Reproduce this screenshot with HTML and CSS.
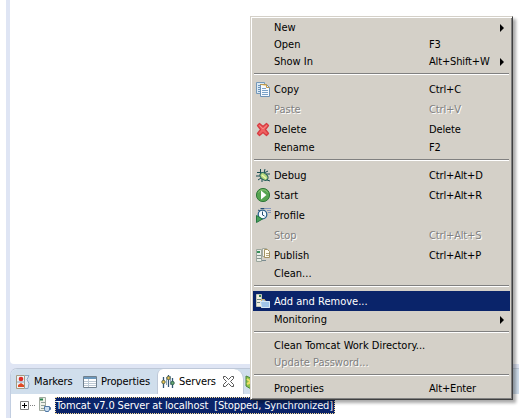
FILE: index.html
```html
<!DOCTYPE html>
<html lang="en">
<head>
<meta charset="utf-8">
<title>Servers</title>
<link rel="stylesheet" href="styles.css">
</head>
<body>
<div class="workbench">
  <main class="editor"></main>
  <section class="view">
    <nav class="tabs">
      <div class="tab markers">
        <svg class="icon" viewBox="0 0 16 16"><path d="M1.500 1.500h8v13h-8z" fill="#edf1f5" stroke="#a39c83"/><path d="M2 8h8" stroke="#8aa6c0"/><circle cx="6" cy="5" r="2.300" fill="#df2b25"/><path d="M3 13V11l3-2 3 2v2z" fill="#df4b25"/><path d="M10 1.500h4l-2 4 2 4-1 5h-3" fill="#dfe9f3" stroke="#8ba9c7"/></svg>
        <span class="t">Markers</span>
      </div>
      <div class="tab properties">
        <svg class="icon" viewBox="0 0 16 16"><path d="M1.500 2.500h13v11h-13z" fill="#fff" stroke="#71808d"/><path d="M2 3h12v2H2z" fill="#6c98bd"/><path d="M6.500 5v8M2 7.500h12M2 9.500h12M2 11.500h12" stroke="#bdc9d4"/></svg>
        <span class="t">Properties</span>
      </div>
      <div class="tab active">
        <svg class="icon" viewBox="0 0 16 16"><path d="M3.500 3v11M8.500 1v12M12.500 4v10" stroke="#315574" stroke-width="1.300"/><path d="M6.500 3v8M10.500 2v9" stroke="#8ba6bb"/><circle cx="3.500" cy="8" r="1.700" fill="#edc64c" stroke="#5c6950"/><circle cx="8.500" cy="4" r="1.700" fill="#e9c151" stroke="#5c6950"/><circle cx="12.500" cy="9" r="1.700" fill="#69ad75" stroke="#31614c"/></svg>
        <span class="t">Servers</span>
        <svg class="close" viewBox="0 0 11 11"><path d="M.5.5h2l3 3 3-3h2v2l-3 3 3 3v2h-2l-3-3-3 3h-2v-2l3-3-3-3z" fill="#fff" stroke="#555"/></svg>
      </div>
      <div class="tab next"><svg class="icon" viewBox="0 0 16 16"><path d="M1 2l5 2 6-2v11l-6 2-5-3z" fill="#8cc34b" stroke="#4c873d"/><path d="M2 5l4 3-4 2" fill="none" stroke="#efdf69" stroke-width="2"/></svg></div>
    </nav>
    <div class="tree">
      <svg class="expander" viewBox="0 0 16 9"><path d="M.5.5h8v8h-8z" fill="#fff" stroke="#808080"/><path d="M2 4.500h5M4.500 2v5" stroke="#000"/><path d="M10 4.500h6" stroke="#808080" stroke-dasharray="1 1"/></svg>
      <svg class="icon server" viewBox="0 0 16 16"><path d="M1.500.5h6v13h-6z" fill="#eef1e8" stroke="#a1aaa0"/><path d="M2 2.500h3" stroke="#26804a" stroke-width="2"/><path d="M3 5.500h4M3 8.500h4M3 11.500h4" stroke="#8f9f98"/><path d="M6.500 9.500h5v3l-1 2h-3l-1-2z" fill="#c9def1" stroke="#4e76a3"/><path d="M11 10.500h1.500v2H11" fill="none" stroke="#4e76a3"/></svg>
      <span class="selected">Tomcat v7.0 Server at localhost&nbsp; [Stopped, Synchronized]</span>
    </div>
  </section>
</div>
<div class="menu">
  <div class="item"><i></i><span>New</span><kbd></kbd><b></b></div>
  <div class="item"><i></i><span>Open</span><kbd>F3</kbd></div>
  <div class="item"><i></i><span>Show In</span><kbd>Alt+Shift+W</kbd><b></b></div>
  <hr>
  <div class="item tall"><i><svg class="icon" viewBox="0 0 16 16"><path d="M.5.5h8v11h-8z" fill="#d9e9f5" stroke="#7598b9"/><path d="M2 3.500h3M2 5.500h3M2 7.500h3M2 9.500h3" stroke="#6b94bb"/><path d="M4.500 2.500h6l3 3v9h-9z" fill="#f7faff" stroke="#6e92b6"/><path d="M4 2.500h6.500v3h3" fill="#f1d596" stroke="#bd994f"/><path d="M6 6.500h4M6 8.500h6M6 10.500h6M6 12.500h6" stroke="#7ba2c8"/></svg></i><span>Copy</span><kbd>Ctrl+C</kbd></div>
  <div class="item tall disabled"><i></i><span>Paste</span><kbd>Ctrl+V</kbd></div>
  <div class="item tall"><i><svg class="icon" viewBox="0 0 16 16"><path d="M1.500 3.500l2-2L7 4.500l3.500-3 2 2L9.500 7.500l3 4-2 2L7 10.500l-3.500 3-2-2 3-4z" fill="#ef6262" stroke="#d83c42" stroke-width="1.300" stroke-linejoin="round"/><path d="M3.500 3.500L7 7l4-3.500" fill="none" stroke="#f58b86"/></svg></i><span>Delete</span><kbd>Delete</kbd></div>
  <div class="item"><i></i><span>Rename</span><kbd>F2</kbd></div>
  <hr>
  <div class="item tall"><i><svg class="icon" viewBox="0 0 16 16"><path d="M4.500 1v3l3 3M1 4.500h4M0 8h5M2 12l3-2M9 1L8 5l4-2M10 6h4M11 12l3 1M6 11v3" fill="none" stroke="#164b50"/><ellipse cx="8" cy="8.500" rx="4.500" ry="3" transform="rotate(40 8 8.500)" fill="#b5d77d" stroke="#24625b"/><path d="M6 7l4 3.500" stroke="#eff7b5" stroke-width="1.300"/></svg></i><span>Debug</span><kbd>Ctrl+Alt+D</kbd></div>
  <div class="item tall"><i><svg class="icon" viewBox="0 0 16 16"><circle cx="7" cy="7" r="6.600" fill="#55a450" stroke="#31783b"/><path d="M2.500 4.500C4 1 10 1 11.500 4.500" fill="none" stroke="#8fc77a"/><path d="M5 2.500L10.500 7 5 11.500z" fill="#fff"/></svg></i><span>Start</span><kbd>Ctrl+Alt+R</kbd></div>
  <div class="item tall"><i><svg class="icon" viewBox="0 0 16 16"><path d="M9 .5h6M11 2.500h4M12 4.500h3" stroke="#8295bd"/><circle cx="6.500" cy="6.500" r="4.300" fill="#f5fbff" stroke="#2b638f" stroke-width="1.300"/><path d="M6.500 3.500v3.500l2 1M4.500 .5h4M2 2l2 1" fill="none" stroke="#244e74"/><path d="M.5 7.500l6 3.500-6 3.500z" fill="#48a25a" stroke="#247441"/></svg></i><span>Profile</span></div>
  <div class="item tall disabled"><i></i><span>Stop</span><kbd>Ctrl+Alt+S</kbd></div>
  <div class="item tall"><i><svg class="icon" viewBox="0 0 16 16"><path d="M.5 1.500h5v12h-5z" fill="#e9ede7" stroke="#9ba69d"/><path d="M1 4h3" stroke="#37905a" stroke-width="2"/><path d="M1 7.500h4M1 10.500h4" stroke="#83938d"/><path d="M6.500 .5h4v8h-4z" fill="#f3f4ef" stroke="#a4a99f"/><path d="M8.500 1.500h3l2 2v6h-5z" fill="#fffdf0" stroke="#a49261"/><path d="M10 5.500h3M10 7.500h3" stroke="#b5a780"/><path d="M6 12.500h4" stroke="#798b91"/></svg></i><span>Publish</span><kbd>Ctrl+Alt+P</kbd></div>
  <div class="item"><i></i><span>Clean...</span></div>
  <hr>
  <div class="item tall hot"><i><svg class="icon" viewBox="0 0 16 16"><path d="M.5.5h5v12h-5z" fill="#f3f0df" stroke="#c3c7b8"/><path d="M3 2h2" stroke="#2f8155" stroke-width="2"/><path d="M1 5.500h4M1 8.500h3" stroke="#718784"/><path d="M5.500 5.500h3l1 2h4v6h-8z" fill="#a9cae9" stroke="#d7b970"/><path d="M4.500 7.500h9v6h-8z" fill="#9fc4e8" stroke="#d6e8f5"/></svg></i><span>Add and Remove...</span></div>
  <div class="item"><i></i><span>Monitoring</span><kbd></kbd><b></b></div>
  <hr>
  <div class="item"><i></i><span>Clean Tomcat Work Directory...</span></div>
  <div class="item disabled"><i></i><span>Update Password...</span></div>
  <hr>
  <div class="item"><i></i><span>Properties</span><kbd>Alt+Enter</kbd></div>
</div>
</body>
</html>
```
FILE: styles.css
```css
* { box-sizing: border-box; }
body {
  margin: 0;
  width: 519px;
  height: 418px;
  overflow: hidden;
  background: #fff;
  color: #000;
  font: 11px/16px "DejaVu Sans Condensed", "DejaVu Sans", sans-serif;
  font-stretch: condensed;
  white-space: nowrap;
}
.workbench {
  height: 418px;
  margin-left: 6px;
  padding-left: 4px;
  background: #dfe5f4;
  display: flex;
  flex-direction: column;
}
.editor { height: 364px; background: #fff; border-bottom-left-radius: 4px; }
.view {
  margin-top: 4px;
  height: 50px;
  border-top: 1px solid #bec8d8;
  border-left: 1px solid #c2cee1;
  border-top-left-radius: 7px;
  background: #fff;
  overflow: hidden;
}
.tabs { display: flex; height: 25px; background: #d0deec; letter-spacing: -0.1px; }
.tab { display: flex; align-items: center; flex: none; }
.icon { width: 16px; height: 16px; flex: none; display: block; }
.tab .t { margin-left: 3px; }
.markers { width: 71px; padding-left: 4px; }
.properties { width: 75px; }
.active {
  width: 87px;
  background: #fff;
  border-left: 1px solid #bec8d8;
  border-right: 1px solid #bec8d8;
  border-radius: 6px 10px 0 0;
  padding-left: 2px;
}
.close { width: 11px; height: 11px; margin-left: 7px; }
.next { padding-left: 1px; }
.tree { display: flex; height: 24px; padding-left: 9px; align-items: flex-start; }
.expander { width: 16px; height: 9px; margin-top: 7px; }
.server { margin: 3px 0 0 2px; }
.selected {
  margin: 3px 0 0 1px;
  width: 280px;
  height: 17px;
  line-height: 15px;
  letter-spacing: -0.13px;
  background: #0a246a;
  color: #fff;
  border: 1px dotted #f5db95;
}
.menu {
  position: absolute;
  left: 250px;
  top: 16px;
  width: 263px;
  height: 384px;
  padding: 2px;
  background: #d4d0c8;
  border: 1px solid;
  border-color: #d4d0c8 #404040 #404040 #d4d0c8;
  box-shadow: inset 1px 1px #fff, inset -1px -1px #808080, 3px 3px 3px #0005;
}
.item { display: flex; align-items: center; height: 17px; }
.tall { height: 20px; padding-top: 2px; }
.item i { width: 21px; padding-left: 3px; flex: none; }
.item span { width: 155px; flex: none; }
.item kbd { width: 71px; font: inherit; letter-spacing: -0.15px; flex: none; }
.item b {
  width: 4px;
  height: 8px;
  border: solid transparent;
  border-width: 4px 0 4px 4px;
  border-left-color: #000;
}
.disabled { color: #808080; text-shadow: 1px 1px #fff; }
.hot { background: #0a246a; color: #fff; }
.menu hr {
  height: 2px;
  margin: 3px 1px 4px;
  border: 0;
  border-top: 1px solid #808080;
  border-bottom: 1px solid #fff;
}
```
